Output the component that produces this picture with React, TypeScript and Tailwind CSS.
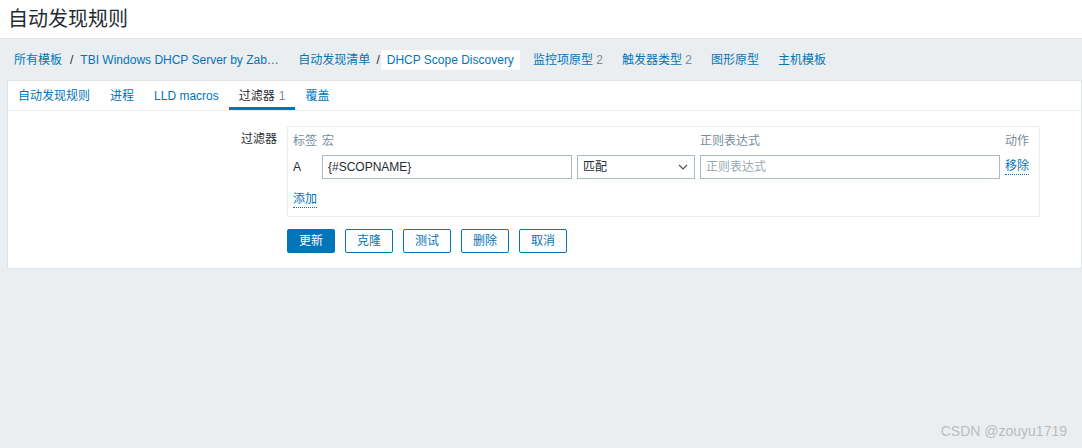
import React from "react";

const FONT = { fontFamily: '"Liberation Sans", Arial, "Noto Sans CJK SC", sans-serif' };

function Chevron() {
  return (
    <svg width="10" height="6" viewBox="0 0 10 6" className="shrink-0">
      <path d="M1 1l4 4 4-4" fill="none" stroke="#4f4f4f" strokeWidth="1.2" />
    </svg>
  );
}

export default function App() {
  return (
    <div className="relative w-[1082px] h-[448px] overflow-hidden bg-[#ebeef0] text-[12px] text-[#1f2c33]" style={FONT}>
      {/* Header */}
      <div className="h-[39px] bg-white border-b border-[#dfe4e7] flex items-center pl-[8px]">
        <h1 className="text-[20px] leading-none font-normal text-[#1f2c33]">自动发现规则</h1>
      </div>

      {/* Breadcrumb nav */}
      <div className="h-[41px] flex items-center pl-[14px] pt-[1px] text-[#0275b8] whitespace-nowrap">
        <span>所有模板</span>
        <span className="ml-[8px] text-[#1f2c33]">/</span>
        <span className="ml-[7px] w-[199px]">TBI Windows DHCP Server by Zab…</span>
        <span className="ml-[19px]">自动发现清单</span>
        <span className="ml-[6px] text-[#1f2c33]">/</span>
        <span className="ml-[1px] bg-white rounded-[2px] h-[20px] px-[6px] flex items-center">DHCP Scope Discovery</span>
        <span className="ml-[13px]">监控项原型 <span className="text-[#768d99]">2</span></span>
        <span className="ml-[19px]">触发器类型 <span className="text-[#768d99]">2</span></span>
        <span className="ml-[19px]">图形原型</span>
        <span className="ml-[19px]">主机模板</span>
      </div>

      {/* Panel */}
      <div className="ml-[7px] bg-white border border-[#dfe4e7] h-[189px]">
        {/* Tabs */}
        <div className="h-[30px] flex border-b border-[#ebeef0]">
          <div className="px-[10px] flex items-center text-[#0275b8]">自动发现规则</div>
          <div className="px-[10px] flex items-center text-[#0275b8]">进程</div>
          <div className="px-[10px] flex items-center text-[#0275b8]">LLD macros</div>
          <div className="px-[10px] flex items-center text-[#1f2c33] border-b-[3px] border-[#0275b8] pt-[3px]">
            过滤器 <span className="ml-[4px] text-[#768d99]">1</span>
          </div>
          <div className="px-[10px] flex items-center text-[#0275b8]">覆盖</div>
        </div>

        {/* Form */}
        <div className="flex pt-[15px]">
          <div className="w-[269px] text-right pt-[4px] leading-[18px]">过滤器</div>
          <div className="ml-[10px] flex flex-col">
            <div className="w-[753px] border border-[#ebeef0] px-[5px] pt-[5px] pb-[7px]">
              <div className="grid grid-cols-[24px_250px_118px_300px_29px] gap-x-[5px] text-[#768d99] h-[18px] items-center">
                <div>标签</div>
                <div>宏</div>
                <div></div>
                <div>正则表达式</div>
                <div>动作</div>
              </div>
              <div className="mt-[5px] grid grid-cols-[24px_250px_118px_300px_29px] gap-x-[5px] items-center">
                <div>A</div>
                <div className="h-[24px] border border-[#acbbc2] px-[5px] flex items-center">{"{#SCOPNAME}"}</div>
                <div className="h-[24px] border border-[#acbbc2] pl-[5px] pr-[6px] flex items-center justify-between">
                  <span>匹配</span>
                  <Chevron />
                </div>
                <div className="h-[24px] border border-[#acbbc2] px-[5px] flex items-center text-[#9aa9b0]">正则表达式</div>
                <div className="text-[#0275b8] border-b border-dotted border-[#0275b8] leading-[15px] w-fit">移除</div>
              </div>
              <div className="mt-[12px] h-[18px] flex items-center">
                <span className="text-[#0275b8] border-b border-dotted border-[#0275b8] leading-[15px]">添加</span>
              </div>
            </div>
            <div className="mt-[12px] flex gap-[10px]">
              <button className="w-[48px] h-[24px] rounded-[2px] bg-[#0275b8] text-white">更新</button>
              <button className="w-[48px] h-[24px] rounded-[2px] border border-[#0275b8] text-[#0275b8] bg-white">克隆</button>
              <button className="w-[48px] h-[24px] rounded-[2px] border border-[#0275b8] text-[#0275b8] bg-white">测试</button>
              <button className="w-[48px] h-[24px] rounded-[2px] border border-[#0275b8] text-[#0275b8] bg-white">删除</button>
              <button className="w-[48px] h-[24px] rounded-[2px] border border-[#0275b8] text-[#0275b8] bg-white">取消</button>
            </div>
          </div>
        </div>
      </div>

      {/* Watermark */}
      <div className="absolute right-[15px] top-[422px] text-[14px] text-[#b9bcbf] leading-[18px]">CSDN @zouyu1719</div>
    </div>
  );
}
